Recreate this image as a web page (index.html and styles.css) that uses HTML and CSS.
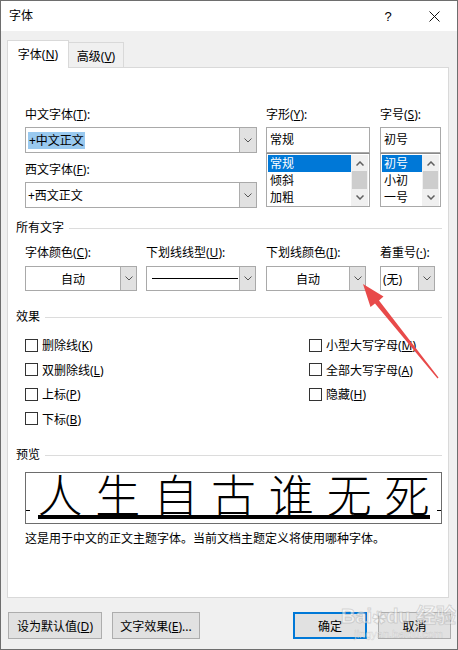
FILE: index.html
```html
<!DOCTYPE html>
<html lang="zh-CN">
<head>
  <meta charset="utf-8">
  <title>字体</title>
  <link rel="stylesheet" href="styles.css">
</head>
<body>
  <div class="window">
    <div class="titlebar">
      <span class="title">字体</span>
      <span class="help">?</span>
      <span class="close">
        <svg width="11" height="11" viewBox="0 0 11 11"><path d="M0.5 0.5 L10.5 10.5 M10.5 0.5 L0.5 10.5" stroke="#111" stroke-width="1" fill="none"/></svg>
      </span>
    </div>

    <div class="client">
      <div class="tabs">
        <div class="tab active">字体(<u>N</u>)</div>
        <div class="tab">高级(<u>V</u>)</div>
      </div>

      <div class="panel">
        <div class="font-grid">
          <div class="field">
            <label>中文字体(<u>T</u>):</label>
            <div class="combo">
              <span class="value"><span class="sel">+中文正文</span></span>
              <span class="drop"><svg width="8" height="5" viewBox="0 0 8 5"><path d="M0.5 0.5 L4 4 L7.5 0.5" stroke="#555" fill="none"/></svg></span>
            </div>
            <label class="second">西文字体(<u>F</u>):</label>
            <div class="combo">
              <span class="value">+西文正文</span>
              <span class="drop"><svg width="8" height="5" viewBox="0 0 8 5"><path d="M0.5 0.5 L4 4 L7.5 0.5" stroke="#555" fill="none"/></svg></span>
            </div>
          </div>

          <div class="field">
            <label>字形(<u>Y</u>):</label>
            <div class="textbox">常规</div>
            <div class="listbox">
              <ul>
                <li class="selected">常规</li>
                <li>倾斜</li>
                <li>加粗</li>
              </ul>
              <div class="scrollbar">
                <span class="arrow-btn"><svg width="8" height="5" viewBox="0 0 8 5"><path d="M0.5 4.5 L4 1 L7.5 4.5" stroke="#606060" stroke-width="1.5" fill="none"/></svg></span>
                <span class="thumb"></span>
                <span class="arrow-btn"><svg width="8" height="5" viewBox="0 0 8 5"><path d="M0.5 0.5 L4 4 L7.5 0.5" stroke="#606060" stroke-width="1.5" fill="none"/></svg></span>
              </div>
            </div>
          </div>

          <div class="field">
            <label>字号(<u>S</u>):</label>
            <div class="textbox">初号</div>
            <div class="listbox">
              <ul>
                <li class="selected">初号</li>
                <li>小初</li>
                <li>一号</li>
              </ul>
              <div class="scrollbar">
                <span class="arrow-btn"><svg width="8" height="5" viewBox="0 0 8 5"><path d="M0.5 4.5 L4 1 L7.5 4.5" stroke="#606060" stroke-width="1.5" fill="none"/></svg></span>
                <span class="thumb"></span>
                <span class="arrow-btn"><svg width="8" height="5" viewBox="0 0 8 5"><path d="M0.5 0.5 L4 4 L7.5 0.5" stroke="#606060" stroke-width="1.5" fill="none"/></svg></span>
              </div>
            </div>
          </div>
        </div>

        <div class="group-title">所有文字</div>
        <div class="color-grid">
          <div class="field">
            <label>字体颜色(<u>C</u>):</label>
            <div class="combo small">
              <span class="value center">自动</span>
              <span class="drop"><svg width="8" height="5" viewBox="0 0 8 5"><path d="M0.5 0.5 L4 4 L7.5 0.5" stroke="#555" fill="none"/></svg></span>
            </div>
          </div>
          <div class="field">
            <label>下划线线型(<u>U</u>):</label>
            <div class="combo small">
              <span class="value"><span class="line-sample"></span></span>
              <span class="drop"><svg width="8" height="5" viewBox="0 0 8 5"><path d="M0.5 0.5 L4 4 L7.5 0.5" stroke="#555" fill="none"/></svg></span>
            </div>
          </div>
          <div class="field">
            <label>下划线颜色(<u>I</u>):</label>
            <div class="combo small">
              <span class="value center">自动</span>
              <span class="drop"><svg width="8" height="5" viewBox="0 0 8 5"><path d="M0.5 0.5 L4 4 L7.5 0.5" stroke="#555" fill="none"/></svg></span>
            </div>
          </div>
          <div class="field">
            <label>着重号(<u>·</u>):</label>
            <div class="combo small">
              <span class="value">(无)</span>
              <span class="drop"><svg width="8" height="5" viewBox="0 0 8 5"><path d="M0.5 0.5 L4 4 L7.5 0.5" stroke="#555" fill="none"/></svg></span>
            </div>
          </div>
        </div>

        <div class="group-title">效果</div>
        <div class="effects">
          <div class="check-col">
            <div class="check"><span class="box"></span><span>删除线(<u>K</u>)</span></div>
            <div class="check"><span class="box"></span><span>双删除线(<u>L</u>)</span></div>
            <div class="check"><span class="box"></span><span>上标(<u>P</u>)</span></div>
            <div class="check"><span class="box"></span><span>下标(<u>B</u>)</span></div>
          </div>
          <div class="check-col">
            <div class="check"><span class="box"></span><span>小型大写字母(<u>M</u>)</span></div>
            <div class="check"><span class="box"></span><span>全部大写字母(<u>A</u>)</span></div>
            <div class="check"><span class="box"></span><span>隐藏(<u>H</u>)</span></div>
          </div>
        </div>

        <div class="group-title">预览</div>
        <div class="preview">
          <span class="dash"></span>
          <div class="preview-text">
            <span>人</span><span>生</span><span>自</span><span>古</span><span>谁</span><span>无</span><span>死</span>
          </div>
          <span class="dash"></span>
        </div>
        <p class="caption">这是用于中文的正文主题字体。当前文档主题定义将使用哪种字体。</p>
      </div>

      <div class="buttons">
        <button class="btn wide">设为默认值(<u>D</u>)</button>
        <button class="btn">文字效果(<u>E</u>)...</button>
        <button class="btn ok">确定</button>
        <button class="btn cancel">取消</button>
      </div>
    </div>

    <svg class="annotation" width="458" height="650" viewBox="0 0 458 650">
      <polygon points="363,284 383.5,296.5 379,300.5 438.5,377.5 437.5,378.5 375,303.5 370.5,307" fill="#e84a4a"/>
    </svg>

    <div class="watermark">
      <span class="wm-logo">Bai<span class="paw">✿</span>du 经验</span>
      <span class="wm-url">jingyan.baidu.com</span>
    </div>
  </div>
</body>
</html>
```

FILE: styles.css
```css
* {
  box-sizing: border-box;
}

body {
  margin: 0;
  background: #ffffff;
  font-family: "Noto Sans", "Noto Sans CJK SC", sans-serif;
  font-size: 12px;
  color: #000000;
}

u {
  text-decoration: underline;
  text-underline-offset: 1px;
}

.window {
  position: relative;
  width: 458px;
  height: 650px;
  border: 1px solid #6e6e6e;
  background: #f0f0f0;
  display: flex;
  flex-direction: column;
  overflow: hidden;
}

.titlebar {
  height: 30px;
  flex: none;
  background: #ffffff;
  display: flex;
  align-items: center;
  padding-left: 8px;
}

.title {
  flex: 1;
  line-height: 16px;
}

.help {
  width: 46px;
  text-align: center;
  font-size: 13px;
  font-family: "Liberation Sans", sans-serif;
}

.close {
  width: 46px;
  display: flex;
  justify-content: center;
}

.client {
  flex: 1;
  padding: 9px 0 0 6px;
}

.tabs {
  display: flex;
  align-items: flex-end;
  height: 27px;
}

.tab {
  height: 25px;
  width: 56px;
  margin-left: -1px;
  border: 1px solid #d9d9d9;
  border-bottom: none;
  background: #f0f0f0;
  text-align: center;
  line-height: 24px;
  padding-top: 2px;
}

.tab.active {
  position: relative;
  z-index: 1;
  margin-left: 0;
  width: 62px;
  height: 28px;
  margin-bottom: -1px;
  background: #ffffff;
  padding-top: 3px;
  line-height: 22px;
}

.panel {
  width: 442px;
  height: 531px;
  border: 1px solid #d9d9d9;
  background: #ffffff;
  padding: 39px 6px 0 8px;
}

label {
  display: block;
  line-height: 16px;
  margin-bottom: 4px;
  white-space: nowrap;
}

label.second {
  margin-top: 9px;
}

.font-grid {
  margin-left: 9px;
  display: grid;
  grid-template-columns: 232px 104px 62px;
  column-gap: 9px;
}

.font-grid .field:last-child {
  margin-left: 1px;
}

.combo {
  display: flex;
  height: 26px;
  border: 1px solid #a9a9a9;
  background: #ffffff;
}

.combo.small {
  height: 25px;
}

.combo .value {
  flex: 1;
  display: flex;
  align-items: center;
  padding-left: 2px;
  white-space: nowrap;
}

.combo .value.center {
  justify-content: center;
  padding-left: 0;
}

.sel {
  background: #99c9ef;
  padding: 0 1px;
  line-height: 17px;
}

.drop {
  width: 17px;
  flex: none;
  border-left: 1px solid #adadad;
  background: #e1e1e1;
  display: flex;
  align-items: center;
  justify-content: center;
}

.line-sample {
  display: block;
  width: 86px;
  height: 1px;
  margin-left: 3px;
  background: #000000;
}

.textbox {
  height: 26px;
  border: 1px solid #a9a9a9;
  padding-left: 3px;
  line-height: 23px;
}

.listbox {
  height: 54px;
  border: 1px solid #a9a9a9;
  border-top-color: #8a8a8a;
  padding: 1px 1px 0 1px;
  display: flex;
}

.listbox ul {
  flex: 1;
  margin: 0;
  padding: 0;
  list-style: none;
}

.listbox li {
  height: 17px;
  line-height: 17px;
  padding-left: 2px;
}

.listbox li.selected {
  background: #0078d7;
  color: #ffffff;
}

.scrollbar {
  width: 17px;
  height: 51px;
  background: #f0f0f0;
  display: flex;
  flex-direction: column;
}

.arrow-btn {
  height: 16px;
  display: flex;
  align-items: center;
  justify-content: center;
}

.thumb {
  height: 18px;
  margin: 0 1px;
  background: #cdcdcd;
}

.group-title {
  display: flex;
  align-items: center;
  gap: 5px;
  line-height: 16px;
  margin-top: 12px;
}

.group-title::after {
  content: "";
  flex: 1;
  height: 1px;
  background: #dcdcdc;
}

.color-grid {
  margin: 9px 0 0 9px;
  display: grid;
  grid-template-columns: 112px 110px 101px 60px;
  column-gap: 9px;
}

.color-grid .field:nth-child(3) {
  margin-left: 1px;
}

.color-grid .field:nth-child(4) {
  margin-left: 5px;
}

.color-grid label {
  margin-bottom: 5px;
}

.color-grid .drop {
  width: 16px;
}

.color-grid + .group-title {
  margin-top: 18px;
}

.effects {
  margin: 8px 0 0 9px;
  display: grid;
  grid-template-columns: 284px 1fr;
}

.check {
  height: 24.5px;
  display: flex;
  align-items: center;
  gap: 4px;
  white-space: nowrap;
}

.box {
  width: 13px;
  height: 13px;
  border: 1px solid #333333;
  background: #ffffff;
}

.effects + .group-title {
  margin-top: 16px;
}

.preview {
  margin: 9px 0 0 9px;
  width: 417px;
  height: 52px;
  border: 1px solid #6d6d6d;
  display: flex;
  justify-content: space-between;
  align-items: flex-start;
  overflow: hidden;
}

.preview-text {
  width: 392px;
  display: flex;
  justify-content: space-between;
  font-family: "Noto Sans CJK SC", sans-serif;
  font-size: 45px;
  line-height: 42px;
  font-weight: 300;
  border-bottom: 4px solid #000000;
}

.dash {
  width: 4px;
  height: 1px;
  margin-top: 37px;
  background: #000000;
}

.caption {
  margin: 7px 0 0 9px;
  line-height: 16px;
}

.buttons {
  display: flex;
  margin-top: 14px;
  padding-left: 1px;
}

.btn {
  height: 27px;
  margin-right: 10px;
  padding: 0;
  border: 1px solid #adadad;
  background: #e1e1e1;
  font-family: inherit;
  font-size: 12px;
  color: #000000;
}

.btn.wide {
  width: 94px;
}

.btn:nth-child(2) {
  width: 88px;
}

.btn.ok {
  width: 74px;
  margin-left: auto;
  margin-right: 11px;
  border: 2px solid #0078d7;
}

.btn.cancel {
  width: 73px;
  margin-right: 6px;
}

.annotation {
  position: absolute;
  left: -1px;
  top: -1px;
  pointer-events: none;
}

.watermark {
  position: absolute;
  left: 340px;
  top: 605px;
  display: flex;
  flex-direction: column;
  align-items: center;
  color: rgba(255, 255, 255, 0.55);
  -webkit-text-stroke: 1px rgba(150, 150, 150, 0.35);
  pointer-events: none;
}

.wm-logo {
  font-family: "Liberation Sans", "Noto Sans CJK SC", sans-serif;
  font-size: 20px;
  font-weight: bold;
  line-height: 20px;
}

.paw {
  font-size: 14px;
}

.wm-url {
  font-family: "Liberation Sans", sans-serif;
  font-size: 11px;
  line-height: 12px;
  -webkit-text-stroke: 0.5px rgba(150, 150, 150, 0.35);
}
```
